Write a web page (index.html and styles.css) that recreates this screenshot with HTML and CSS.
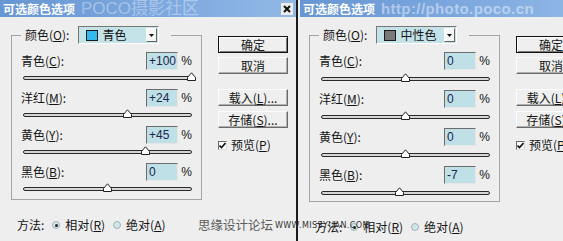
FILE: index.html
```html
<!DOCTYPE html>
<html lang="zh-CN">
<head>
    <meta charset="UTF-8">
    <title>可选颜色选项</title>
    <link rel="stylesheet" href="styles.css">
</head>
<body>
    <div class="screen">
        <div class="dialog">
            <div class="titlebar">
                <span class="title">可选颜色选项</span>
                <span class="mark-poco">POCO摄影社区</span>
                <span class="close"><svg width="8" height="8" viewBox="0 0 8 8"><path d="M1 1 L7 7 M7 1 L1 7" stroke="#111" stroke-width="2"/></svg></span>
            </div>
            <div class="body">
                <div class="main">
                    <fieldset class="group">
                        <legend class="legend">
                            <span class="legend-label">颜色(<u>O</u>):</span>
                            <span class="select">
                                <span class="swatch swatch-cyan"></span>
                                <span class="select-text">青色</span>
                                <span class="select-arrow"><svg width="5" height="3" viewBox="0 0 5 3"><path d="M0 0 H5 L2.5 3 Z" fill="#111"/></svg></span>
                            </span>
                        </legend>
                        <div class="field">
                            <div class="field-top"><span class="field-label">青色(<u>C</u>):</span><span class="num">+100</span><span class="pct">%</span></div>
                            <div class="track-wrap"><div class="track"><span class="thumb" style="left: 100%"><svg width="9" height="9" viewBox="0 0 9 9"><path d="M0.5 8.5 V5.5 L4.5 0.8 L8.5 5.5 V8.5 Z" fill="#fff" stroke="#222"/></svg></span></div></div>
                        </div>
                        <div class="field">
                            <div class="field-top"><span class="field-label">洋红(<u>M</u>):</span><span class="num">+24</span><span class="pct">%</span></div>
                            <div class="track-wrap"><div class="track"><span class="thumb" style="left: 62%"><svg width="9" height="9" viewBox="0 0 9 9"><path d="M0.5 8.5 V5.5 L4.5 0.8 L8.5 5.5 V8.5 Z" fill="#fff" stroke="#222"/></svg></span></div></div>
                        </div>
                        <div class="field">
                            <div class="field-top"><span class="field-label">黄色(<u>Y</u>):</span><span class="num">+45</span><span class="pct">%</span></div>
                            <div class="track-wrap"><div class="track"><span class="thumb" style="left: 72.5%"><svg width="9" height="9" viewBox="0 0 9 9"><path d="M0.5 8.5 V5.5 L4.5 0.8 L8.5 5.5 V8.5 Z" fill="#fff" stroke="#222"/></svg></span></div></div>
                        </div>
                        <div class="field">
                            <div class="field-top"><span class="field-label">黑色(<u>B</u>):</span><span class="num">0</span><span class="pct">%</span></div>
                            <div class="track-wrap"><div class="track"><span class="thumb" style="left: 50%"><svg width="9" height="9" viewBox="0 0 9 9"><path d="M0.5 8.5 V5.5 L4.5 0.8 L8.5 5.5 V8.5 Z" fill="#fff" stroke="#222"/></svg></span></div></div>
                        </div>
                    </fieldset>
                    <div class="method">
                        <span>方法:</span>
                        <span class="radio radio-on"></span><span>相对(<u>R</u>)</span>
                        <span class="radio"></span><span>绝对(<u>A</u>)</span>
                    </div>
                </div>
                <div class="side">
                    <div class="btn btn-default">确定</div>
                    <div class="btn btn-cancel">取消</div>
                    <div class="btn btn-load">载入(<u>L</u>)...</div>
                    <div class="btn btn-save">存储(<u>S</u>)...</div>
                    <div class="check-row">
                        <span class="checkbox"><svg width="7" height="7" viewBox="0 0 7 7"><path d="M0.5 3.5 L2.5 5.5 L6.5 1" fill="none" stroke="#111" stroke-width="1.6"/></svg></span>
                        <span>预览(<u>P</u>)</span>
                    </div>
                </div>
            </div>
        </div>

        <div class="divider"></div>

        <div class="dialog dialog-alt">
            <div class="titlebar">
                <span class="title">可选颜色选项</span>
                <span class="mark-url-title">http://photo.poco.cn</span>
                <span class="close"><svg width="8" height="8" viewBox="0 0 8 8"><path d="M1 1 L7 7 M7 1 L1 7" stroke="#111" stroke-width="2"/></svg></span>
            </div>
            <div class="body">
                <div class="main">
                    <fieldset class="group">
                        <legend class="legend">
                            <span class="legend-label">颜色(<u>O</u>):</span>
                            <span class="select">
                                <span class="swatch swatch-gray"></span>
                                <span class="select-text">中性色</span>
                                <span class="select-arrow"><svg width="5" height="3" viewBox="0 0 5 3"><path d="M0 0 H5 L2.5 3 Z" fill="#111"/></svg></span>
                            </span>
                        </legend>
                        <div class="field">
                            <div class="field-top"><span class="field-label">青色(<u>C</u>):</span><span class="num">0</span><span class="pct">%</span></div>
                            <div class="track-wrap"><div class="track"><span class="thumb" style="left: 50%"><svg width="9" height="9" viewBox="0 0 9 9"><path d="M0.5 8.5 V5.5 L4.5 0.8 L8.5 5.5 V8.5 Z" fill="#fff" stroke="#222"/></svg></span></div></div>
                        </div>
                        <div class="field">
                            <div class="field-top"><span class="field-label">洋红(<u>M</u>):</span><span class="num">0</span><span class="pct">%</span></div>
                            <div class="track-wrap"><div class="track"><span class="thumb" style="left: 50%"><svg width="9" height="9" viewBox="0 0 9 9"><path d="M0.5 8.5 V5.5 L4.5 0.8 L8.5 5.5 V8.5 Z" fill="#fff" stroke="#222"/></svg></span></div></div>
                        </div>
                        <div class="field">
                            <div class="field-top"><span class="field-label">黄色(<u>Y</u>):</span><span class="num">0</span><span class="pct">%</span></div>
                            <div class="track-wrap"><div class="track"><span class="thumb" style="left: 50%"><svg width="9" height="9" viewBox="0 0 9 9"><path d="M0.5 8.5 V5.5 L4.5 0.8 L8.5 5.5 V8.5 Z" fill="#fff" stroke="#222"/></svg></span></div></div>
                        </div>
                        <div class="field">
                            <div class="field-top"><span class="field-label">黑色(<u>B</u>):</span><span class="num">-7</span><span class="pct">%</span></div>
                            <div class="track-wrap"><div class="track"><span class="thumb" style="left: 46.5%"><svg width="9" height="9" viewBox="0 0 9 9"><path d="M0.5 8.5 V5.5 L4.5 0.8 L8.5 5.5 V8.5 Z" fill="#fff" stroke="#222"/></svg></span></div></div>
                        </div>
                    </fieldset>
                    <div class="method">
                        <span>方法:</span>
                        <span class="radio radio-on"></span><span>相对(<u>R</u>)</span>
                        <span class="radio"></span><span>绝对(<u>A</u>)</span>
                    </div>
                </div>
                <div class="side">
                    <div class="btn btn-default">确定</div>
                    <div class="btn btn-cancel">取消</div>
                    <div class="btn btn-load">载入(<u>L</u>)...</div>
                    <div class="btn btn-save">存储(<u>S</u>)...</div>
                    <div class="check-row">
                        <span class="checkbox"><svg width="7" height="7" viewBox="0 0 7 7"><path d="M0.5 3.5 L2.5 5.5 L6.5 1" fill="none" stroke="#111" stroke-width="1.6"/></svg></span>
                        <span>预览(<u>P</u>)</span>
                    </div>
                </div>
            </div>
        </div>

        <!-- forum watermark laid over both dialogs -->
        <span class="mark-site">思缘设计论坛</span>
        <span class="mark-site-url">WWW.MISSYUAN.COM</span>
    </div>
</body>
</html>
```

FILE: styles.css
```css
body {
    margin: 0;
    background-color: #ececec;
    font-family: "Noto Sans CJK SC", "Liberation Sans", sans-serif;
    font-size: 12px;
    color: #141414;
}
.screen {
    position: relative;
    display: flex;
    width: 563px;
    height: 241px;
    overflow: hidden;
}
.dialog {
    flex: 0 0 296px;
    width: 296px;
    display: flex;
    flex-direction: column;
    background-color: #eeeeee;
}
.divider {
    flex: 0 0 2px;
    background-color: #1c1c1c;
}
.titlebar {
    height: 17px;
    display: flex;
    align-items: center;
    padding-left: 3px;
    background: linear-gradient(90deg, #6796d2, #7faae0 60%, #92b9e6);
    color: #fff;
}
.dialog-alt .titlebar {
    margin-left: 2px;
}
.title {
    font-weight: bold;
    line-height: 14px;
}
.mark-poco {
    margin-left: 6px;
    font-family: "Liberation Sans", "Noto Sans CJK SC", sans-serif;
    font-size: 17px;
    line-height: 17px;
    color: rgba(255, 255, 255, 0.36);
}
.mark-url-title {
    margin-left: 6px;
    font-family: "Liberation Sans", sans-serif;
    font-weight: bold;
    font-size: 15px;
    letter-spacing: 0.4px;
    line-height: 17px;
    color: rgba(255, 255, 255, 0.45);
}
.close {
    margin-left: auto;
    margin-right: 3px;
    width: 12px;
    height: 12px;
    display: flex;
    align-items: center;
    justify-content: center;
    background-color: #ececec;
}
.body {
    display: flex;
}
.main {
    margin-left: 11px;
    width: 191px;
}
.group {
    margin: 9px 0 0;
    padding: 8px 9px 0;
    width: 191px;
    min-width: 0;
    box-sizing: border-box;
    border: 1px solid #a4a4a4;
}
.legend {
    display: flex;
    align-items: center;
    height: 18px;
    padding: 0 12px 0 4px;
}
.legend-label {
    line-height: 14px;
}
.select {
    margin-left: 9px;
    width: 81px;
    height: 18px;
    box-sizing: border-box;
    display: flex;
    align-items: center;
    padding-left: 7px;
    background-color: #c4e3e9;
    border: 1px solid;
    border-color: #777 #fff #fff #777;
}
.swatch {
    width: 12px;
    height: 11px;
    box-sizing: border-box;
    border: 1px solid #1b1b1b;
}
.swatch-cyan {
    background-color: #31b8ec;
}
.swatch-gray {
    background-color: #7a7a7a;
}
.select-text {
    margin-left: 4px;
    line-height: 14px;
}
.select-arrow {
    margin-left: auto;
    margin-right: 1px;
    width: 11px;
    height: 14px;
    box-sizing: border-box;
    display: flex;
    align-items: center;
    justify-content: center;
    background-color: #f6f6f6;
    border: 1px solid;
    border-color: #fff #666 #666 #fff;
}
.field-top {
    display: flex;
    align-items: center;
    height: 18px;
}
.field-label {
    flex: 1;
    line-height: 14px;
}
.num {
    width: 32px;
    height: 18px;
    box-sizing: border-box;
    padding-left: 2px;
    background-color: #bfe0e6;
    border: 1px solid;
    border-color: #6c6c6c #e6e6e6 #e6e6e6 #6c6c6c;
    font-family: "Liberation Sans", sans-serif;
    line-height: 16px;
    color: #1c2650;
}
.pct {
    width: 14px;
    text-align: right;
    font-family: "Liberation Sans", sans-serif;
    line-height: 14px;
}
.track-wrap {
    height: 19px;
    box-sizing: border-box;
    padding: 6px 0 0 2px;
}
.field:last-child .track-wrap {
    height: 18px;
}
.dialog-alt .track-wrap {
    height: 20px;
    padding-top: 7px;
}
.dialog-alt .field:last-child .track-wrap {
    height: 17px;
}
.track {
    position: relative;
    height: 4px;
    box-sizing: border-box;
    border: 1px solid #2a2a2a;
    border-radius: 2px;
    background-color: #d6d6d6;
}
.thumb {
    position: absolute;
    top: -5px;
    width: 9px;
    height: 9px;
    margin-left: -4.5px;
    line-height: 0;
}
.method {
    display: flex;
    align-items: center;
    height: 14px;
    margin-top: 18px;
    padding-left: 6px;
    line-height: 14px;
}
.radio {
    position: relative;
    width: 8px;
    height: 8px;
    box-sizing: border-box;
    margin: 0 5px 0 8px;
    border: 1px solid #9fb4b8;
    border-radius: 50%;
    background-color: #d3e6ea;
}
.radio-on::after {
    content: "";
    position: absolute;
    left: 1.5px;
    top: 1.5px;
    width: 3px;
    height: 3px;
    border-radius: 50%;
    background-color: #222;
}
.side {
    width: 70px;
    margin: 19px 0 0 16px;
    display: flex;
    flex-direction: column;
}
.btn {
    height: 17px;
    box-sizing: border-box;
    text-align: center;
    line-height: 15px;
    background-color: #efefef;
    border: 1px solid;
    border-color: #fcfcfc #6a6a6a #6a6a6a #fcfcfc;
    box-shadow: inset -1px -1px 0 #b0b0b0;
}
.btn-default {
    border-color: #111;
    box-shadow: inset 1px 1px 0 #fff, inset -1px -1px 0 #7a7a7a;
}
.btn-cancel {
    margin-top: 4px;
}
.btn-load {
    margin-top: 15px;
}
.btn-save {
    margin-top: 5px;
}
.check-row {
    display: flex;
    align-items: center;
    height: 14px;
    margin-top: 10px;
    line-height: 14px;
}
.checkbox {
    width: 9px;
    height: 9px;
    box-sizing: border-box;
    margin-right: 4px;
    display: flex;
    align-items: center;
    justify-content: center;
    background-color: #fafafa;
    border: 1px solid;
    border-color: #6a6a6a #ddd #ddd #6a6a6a;
}
.mark-site {
    position: absolute;
    left: 198px;
    top: 217px;
    font-size: 12.5px;
    line-height: 15px;
    color: #5c5c5c;
}
.mark-site-url {
    position: absolute;
    left: 275px;
    top: 221px;
    font-family: "DejaVu Sans", sans-serif;
    font-size: 8px;
    letter-spacing: 0.4px;
    line-height: 10px;
    color: #333;
}
```
